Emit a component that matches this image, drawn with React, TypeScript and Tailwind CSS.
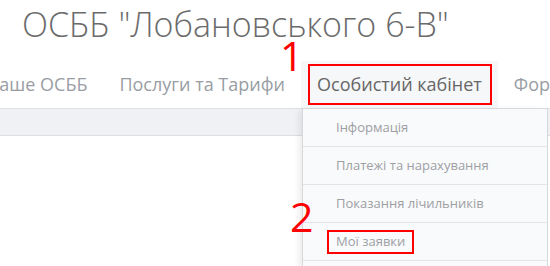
import React from 'react';

const navItems = ['Наше ОСББ', 'Послуги та Тарифи', 'Особистий кабінет', 'Форум'];
const menuItems = ['Інформація', 'Платежі та нарахування', 'Показання лічильників', 'Мої заявки', 'Вихід'];

export default function App() {
  return (
    <div className="relative w-[550px] h-[266px] overflow-hidden bg-white font-['Open_Sans',sans-serif]">
      {/* заголовок */}
      <h1 className="pl-[22px] text-[34px] leading-[49px] font-light text-[#6b6b6b] whitespace-nowrap">
        ОСББ "Лобановського 6-В"
      </h1>

      {/* меню */}
      <nav className="mt-[12px] flex h-[47px] ml-[-30px] whitespace-nowrap">
        {navItems.map((item) => {
          const active = item === 'Особистий кабінет';
          return (
            <div
              key={item}
              className={
                active
                  ? 'relative flex items-center px-4 text-[18px] bg-[#f6f7f9] text-[#666]'
                  : 'relative flex items-center px-4 text-[18px] text-[#999da3]'
              }
            >
              {item}
              {active && (
                <span className="absolute left-[7px] right-[6px] top-[3px] bottom-[3px] border-2 border-[#ff0000]" />
              )}
            </div>
          );
        })}
      </nav>
      <div className="h-[28px] bg-[#f0f1f5] border-y border-[#dedfe2]" />

      {/* выпадающее меню */}
      <div className="absolute left-[302px] top-[108px] w-[246px] bg-[#f9fafc] border border-[#d6d8dc] shadow-[-3px_2px_6px_rgba(0,0,0,0.08)]">
        {menuItems.map((item) => (
          <div key={item} className="h-[38px] flex items-center pl-[33px] border-b border-[#e3e5e8] text-[13px] text-[#9d9fa3]">
            {item === 'Мої заявки' ? (
              <span className="ml-[-9px] px-[7px] h-[24px] flex items-center border-2 border-[#ff0000]">{item}</span>
            ) : (
              item
            )}
          </div>
        ))}
      </div>

      {/* пометки */}
      <span className="absolute left-[280px] top-[28px] text-[41px] leading-[55px] text-[#ff0000]">1</span>
      <span className="absolute left-[290px] top-[189px] text-[41px] leading-[55px] text-[#ff0000]">2</span>
    </div>
  );
}
